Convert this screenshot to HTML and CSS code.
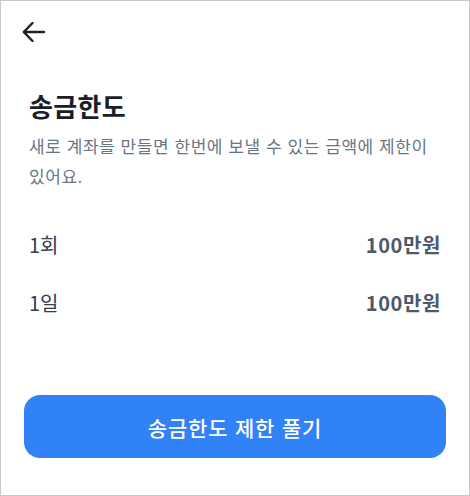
FILE: index.html
```html
<!DOCTYPE html>
<html lang="ko">
<head>
    <meta charset="UTF-8">
    <meta name="viewport" content="width=device-width, initial-scale=1.0">
    <title>송금한도</title>
    <link rel="stylesheet" href="styles.css">
</head>
<body>
    <div class="screen">
        <header class="top-bar">
            <button class="back-button" aria-label="뒤로">
                <svg width="24" height="24" viewBox="0 0 24 24" fill="none" stroke="#191f28" stroke-width="2.4" stroke-linecap="round" stroke-linejoin="round">
                    <path d="M22 12H2"/>
                    <path d="M10.5 3L1.8 12l8.7 9"/>
                </svg>
            </button>
        </header>

        <main class="content">
            <h1 class="title">송금한도</h1>
            <p class="desc">새로 계좌를 만들면 한번에 보낼 수 있는 금액에 제한이 있어요.</p>

            <ul class="limit-list">
                <li class="limit-row">
                    <span class="limit-label">1회</span>
                    <span class="limit-value">100만원</span>
                </li>
                <li class="limit-row">
                    <span class="limit-label">1일</span>
                    <span class="limit-value">100만원</span>
                </li>
            </ul>
        </main>

        <div class="bottom">
            <button class="button">송금한도 제한 풀기</button>
        </div>
    </div>
</body>
</html>
```

FILE: styles.css
```css
body {
    margin: 0;
    background-color: #fff;
    font-family: "Noto Sans CJK KR", "Noto Sans", sans-serif;
    color: #191f28;
}

.screen {
    width: 470px;
    height: 496px;
    box-sizing: border-box;
    border: 1px solid #c9c9c9;
    display: flex;
    flex-direction: column;
}

.top-bar {
    height: 62px;
    display: flex;
    align-items: center;
    padding-left: 21px;
}

.back-button {
    background: none;
    border: none;
    padding: 0;
    width: 24px;
    height: 24px;
    display: flex;
}

.content {
    flex: 1;
    padding: 25px 28px 0;
}

.title {
    margin: 0;
    font-size: 26px;
    line-height: 36px;
    font-weight: 700;
    letter-spacing: 0.3px;
    color: #191f28;
}

.desc {
    margin: 7px 0 0;
    font-size: 17px;
    line-height: 30px;
    letter-spacing: 0.55px;
    color: #6b7684;
}

.limit-list {
    list-style: none;
    margin: 38px 0 0;
    padding: 0;
}

.limit-row {
    display: flex;
    justify-content: space-between;
    align-items: center;
    height: 30px;
    margin-bottom: 28px;
    font-size: 20px;
}

.limit-label {
    color: #333d4b;
}

.limit-value {
    color: #4e5968;
    font-weight: 700;
    letter-spacing: 0.6px;
}

.bottom {
    padding: 0 23px 37px;
}

.button {
    width: 100%;
    height: 63px;
    background: #3182f6;
    color: #fff;
    border: none;
    border-radius: 16px;
    font-family: "Noto Sans CJK KR", "Noto Sans", sans-serif;
    font-size: 21px;
    font-weight: 500;
    letter-spacing: 0.8px;
}
```
